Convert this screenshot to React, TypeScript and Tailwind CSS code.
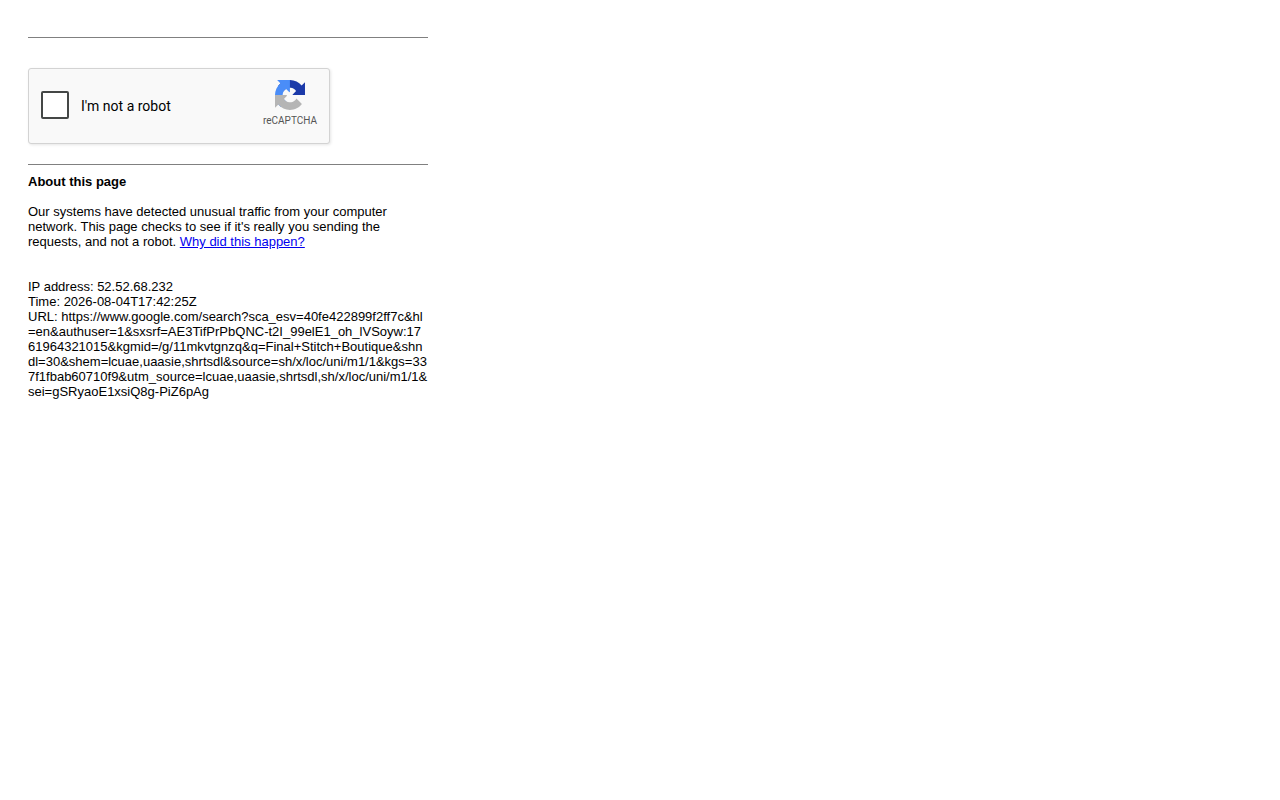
const details = [
  "IP address: 52.52.68.232",
  "Time: 2026-08-04T17:42:25Z",
  "URL: https://www.google.com/search?sca_esv=40fe422899f2ff7c&hl=en&authuser=1&sxsrf=AE3TifPrPbQNC-t2I_99elE1_oh_lVSoyw:1761964321015&kgmid=/g/11mkvtgnzq&q=Final+Stitch+Boutique&shndl=30&shem=lcuae,uaasie,shrtsdl&source=sh/x/loc/uni/m1/1&kgs=337f1fbab60710f9&utm_source=lcuae,uaasie,shrtsdl,sh/x/loc/uni/m1/1&sei=gSRyaoE1xsiQ8g-PiZ6pAg",
]

function RecaptchaLogo() {
  return (
    <svg viewBox="0 0 64 64" className="size-8 p-px" aria-hidden="true">
      <path
        fill="#1c3aa9"
        d="M64 31.955l-.033-1.37V4.687l-7.16 7.16C50.948 4.674 42.033.093 32.05.093c-10.4 0-19.622 4.96-25.458 12.64l11.736 11.86a15.55 15.55 0 0 1 4.754-5.334c2.05-1.6 4.952-2.906 8.968-2.906.485 0 .86.057 1.135.163 4.976.393 9.288 3.14 11.828 7.124l-8.307 8.307L64 31.953"
      />
      <path
        fill="#4a8df8"
        d="M31.862.094l-1.37.033H4.594l7.16 7.16C4.58 13.147 0 22.06 0 32.046c0 10.4 4.96 19.622 12.64 25.458L24.5 45.768a15.55 15.55 0 0 1-5.334-4.754c-1.6-2.05-2.906-4.952-2.906-8.968 0-.485.057-.86.163-1.135.393-4.976 3.14-9.288 7.124-11.828l8.307 8.307L31.86.095"
      />
      <path
        fill="#b5b5b5"
        d="M.001 32.045l.033 1.37v25.898l7.16-7.16c5.86 7.173 14.774 11.754 24.76 11.754 10.4 0 19.622-4.96 25.458-12.64l-11.736-11.86a15.55 15.55 0 0 1-4.754 5.334c-2.05 1.6-4.952 2.906-8.968 2.906-.485 0-.86-.057-1.135-.163-4.976-.393-9.288-3.14-11.828-7.124l8.307-8.307c-10.522.04-22.4.066-27.295-.005"
      />
      <circle cx="31" cy="32" r="6" fill="#f9f9f9" />
    </svg>
  )
}

function CaptchaBox() {
  return (
    <div className="flex max-w-[302px] items-center justify-between rounded-[3px] border border-[#d3d3d3] bg-[#f9f9f9] pt-[10px] pr-3 pb-4 pl-3 shadow-[1px_1px_3px_rgba(0,0,0,0.1)]">
      <div className="flex items-center gap-3 pt-1">
        <input
          id="not-a-robot"
          type="checkbox"
          className="size-7 appearance-none rounded-xs border-2 border-[#444746] bg-white checked:bg-[#4285f4]"
        />
        <label htmlFor="not-a-robot" className="pt-0.5 font-[Roboto,sans-serif] text-sm leading-4">
          I'm not a robot
        </label>
      </div>
      <div className="flex flex-col items-center text-[#555555]">
        <RecaptchaLogo />
        <span className="pt-1 font-[Roboto,sans-serif] text-[10px] leading-3">reCAPTCHA</span>
      </div>
    </div>
  )
}

export default function App() {
  return (
    <main className="max-w-[456px] px-7 py-9 font-['Liberation_Sans',Arial,sans-serif] text-[13px] leading-[15px] text-black">
      <hr className="mt-px border-[#808080]" />
      <form className="pt-[30px] pb-5">
        <CaptchaBox />
      </form>
      <hr className="border-[#808080]" />

      <h1 className="pt-[9px] font-bold">About this page</h1>
      <p className="pt-[15px]">
        Our systems have detected unusual traffic from your computer network. This page checks to see if it's really you
        sending the requests, and not a robot.{" "}
        <a href="#why" className="text-[#0000ee] underline">
          Why did this happen?
        </a>
      </p>

      <div className="pt-[30px] break-all">
        {details.map((line) => (
          <p key={line}>{line}</p>
        ))}
      </div>
    </main>
  )
}
